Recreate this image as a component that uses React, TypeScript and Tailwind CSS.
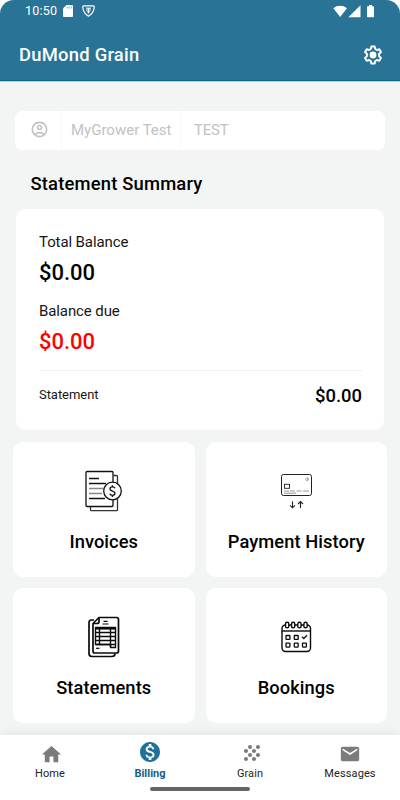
import type { ReactNode } from "react";
import {
  MdHome,
  MdMonetizationOn,
  MdGrain,
  MdEmail,
  MdOutlineAccountCircle,
} from "react-icons/md";

function StatusBar() {
  return (
    <div className="flex h-[22px] items-center pl-[25px] pr-[25px] text-white">
      <span className="w-[33px] whitespace-nowrap text-[12.5px] leading-[22px] tracking-[0.2px]">10:50</span>
      <svg className="ml-[5px] h-[12px] w-[10px]" viewBox="0 0 10 12" fill="none">
        <path d="M3.4 0H9a1 1 0 0 1 1 1v10a1 1 0 0 1-1 1H1a1 1 0 0 1-1-1V3.4z" fill="#fff" />
        <path d="M4.2 1.5v2M6.2 1.5v2M8.2 1.5v2" stroke="#287396" strokeOpacity=".65" strokeWidth=".9" />
      </svg>
      <svg className="ml-[9px] h-[12px] w-[13px]" viewBox="0 0 13 12" fill="none" stroke="#fff">
        <path d="M1.500 .8h10q.8 0 .7 1.400C12 5.500 9.500 9.300 6.500 11.200 3.500 9.300 1 5.500.8 2.200Q.7.8 1.500.8z" strokeWidth="1.2" strokeLinejoin="round" />
        <path d="M4 3.200h5M4 5h4.800M5 6.800h3M6.500 3v5.500" strokeWidth="1" />
      </svg>
      <svg className="ml-auto h-[13px] w-[42px]" viewBox="0 0 42 13" fill="#fff">
        <path d="M.3 3.200C4-.1 10.300-.1 14 3.200L7.200 12z" />
        <path d="M27.500 .3V12.300H15.300z" />
        <path d="M36 0h3v1.200h1.200a.8.8 0 0 1 .8.8v9.500a.8.8 0 0 1-.8.8h-5.400a.8.8 0 0 1-.8-.8V2a.8.8 0 0 1 .8-.8H36z" />
      </svg>
    </div>
  );
}

function GearIcon() {
  return (
    <svg className="size-[22px]" viewBox="0 0 22 22" fill="none" stroke="#fff">
      <path
        d="M9.300 2.500h3.400l.5 2.500 1.700 1 2.400-.8 1.700 2.900-1.900 1.700v2.400l1.900 1.700-1.700 2.900-2.400-.8-1.700 1-.5 2.500H9.300L8.800 17l-1.700-1-2.400.8L3 13.900l1.900-1.700V9.800L3 8.100l1.700-2.900 2.400.8 1.700-1z"
        strokeWidth="1.900"
        strokeLinejoin="round"
      />
      <circle cx="11" cy="11" r="3.400" fill="#fff" stroke="none" />
    </svg>
  );
}

function InvoiceIcon() {
  return (
    <svg className="h-[60px] w-[70px]" viewBox="0 0 70 60" fill="none" stroke="#111" strokeWidth="1.300" strokeLinejoin="round">
      <path d="M20.500 46.500v3.200q0 1 1 1h25q1 0 1-1V16.500q0-1-1-1h-3" stroke="#333" />
      <rect x="16" y="11.500" width="27" height="35" rx="1" fill="#fff" />
      <path d="M19 18.500h10M19 23.500h17M19 38.500h16" />
      <path d="M19 28.500h16M19 33.500h13" stroke="#888" />
      <circle cx="42.500" cy="31" r="8.800" fill="#fff" />
      <path d="M45 28.300c-.5-1-1.400-1.400-2.600-1.400-1.500 0-2.400.8-2.400 2 0 2.800 5 1.500 5 4.300 0 1.300-1 2.100-2.600 2.100-1.200 0-2.200-.5-2.700-1.500M42.400 25.200v1.700M42.400 35.300v1.700" />
    </svg>
  );
}

function CardIcon() {
  return (
    <svg className="h-[60px] w-[70px]" viewBox="0 0 70 60" fill="none" stroke="#222" strokeWidth="1">
      <rect x="16.500" y="14.500" width="30" height="21" rx="2" />
      <rect x="19.500" y="24.300" width="5" height="4" strokeWidth=".9" />
      <path d="m40.500 19.400 1.200-1.500 1.400 1.500-1.400 1.200z" stroke="#777" strokeWidth=".7" />
      <path d="M42.300 17.300c1.300 1.100 1.300 2.500 0 3.600" stroke="#777" strokeWidth=".6" />
      <path d="M19 31h5M25 31h5M31.500 31h5M38 31h6M19 33.200h12" stroke="#8a8a8a" strokeWidth=".9" />
      <path d="M27.500 41.300v6.400M25 45.300l2.500 2.500 2.500-2.500M35.500 48v-6.400M33 44l2.500-2.500L38 44" strokeWidth="1.100" />
    </svg>
  );
}

function StatementIcon() {
  return (
    <svg className="h-[60px] w-[70px]" viewBox="0 1 70 60" fill="none" stroke="#0b0b0b" strokeWidth="1.700" strokeLinejoin="round">
      <path d="M24 15h-2.500Q19 15 19 17.500v31q0 3 3 3h20q3 0 3-3" />
      <path d="M29 12.500h17.500q2 0 2 2V46q0 2-2 2h-22q-1.500 0-1.500-2V18.500z" fill="#fff" />
      <path d="M29 12.500v4q0 2-2 2h-4" />
      <path d="M33.500 16.300h4M32.500 19h6" strokeWidth="1.200" />
      <path d="M25.500 22.500h20v20h-5v-3h-15z" strokeWidth="1.400" />
      <path d="M25.500 23.500h20" strokeWidth="2.200" />
      <path d="M25.500 27.500h20M25.500 31.500h20M25.500 35.500h20M25.500 39.500h20M29.500 24v15.500M40.500 24v18" strokeWidth="1.400" />
      <path d="M26 43.300h3.500" strokeWidth="1.200" />
    </svg>
  );
}

function CalendarIcon() {
  return (
    <svg className="h-[60px] w-[70px]" viewBox="0 1.500 70 60" fill="none" stroke="#0b0b0b" strokeWidth="1.400" strokeLinejoin="round">
      <rect x="17" y="20.500" width="28.500" height="26.500" rx="3.500" />
      <path d="M17 26.500h28.500" />
      <rect x="20.500" y="17.800" width="3.300" height="5.500" rx="1.600" fill="#fff" />
      <rect x="26.500" y="17.800" width="3.300" height="5.500" rx="1.600" fill="#fff" />
      <rect x="32.800" y="17.800" width="3.300" height="5.500" rx="1.600" fill="#fff" />
      <rect x="38.900" y="17.800" width="3.300" height="5.500" rx="1.600" fill="#fff" />
      <g strokeWidth="1.300">
        <rect x="21" y="31" width="3.900" height="3.900" rx=".5" />
        <rect x="29.300" y="31" width="3.900" height="3.900" rx=".5" />
        <path d="m37 32.300 1.800 1.700 3.200-3.200" />
        <rect x="21" y="38.700" width="3.900" height="3.900" rx=".5" />
        <rect x="29.300" y="38.700" width="3.900" height="3.900" rx=".5" />
        <rect x="37.500" y="38.700" width="3.900" height="3.900" rx=".5" />
      </g>
    </svg>
  );
}

function Tile({ icon, label }: { icon: ReactNode; label: string }) {
  return (
    <button className="flex h-[135px] flex-col items-center rounded-[10px] bg-white pt-[18px]">
      {icon}
      <span className="mt-[10px] whitespace-nowrap text-[18.3px] font-medium leading-6 tracking-[0.08px] text-black">
        {label}
      </span>
    </button>
  );
}

function NavItem({ icon, label, active }: { icon: ReactNode; label: string; active?: boolean }) {
  return (
    <div className="flex w-[100px] flex-col items-center">
      <span className="flex h-[30px] items-end justify-center">{icon}</span>
      <span
        className={
          active
            ? "mt-[2px] text-[11px] font-bold leading-[14px] text-[#185f86]"
            : "mt-[2px] text-[11px] leading-[14px] tracking-[0.1px] text-[#222]"
        }
      >
        {label}
      </span>
    </div>
  );
}

export default function App() {
  return (
    <div className="h-[800px] w-[400px] overflow-hidden bg-white font-['Roboto',sans-serif]">
      <div className="flex h-[735px] flex-col overflow-hidden rounded-t-[14px] bg-[#f3f5f5]">
        <header className="h-[82px] shrink-0 border-b border-[#b5ced9] bg-[#287396]">
          <StatusBar />
          <div className="flex h-[59px] items-center justify-between border-b border-[#086390] pl-[19px] pr-[16px] pt-[7px] text-white">
            <h1 className="text-[18.400px] font-medium leading-6 tracking-[0.25px]">DuMond Grain</h1>
            <GearIcon />
          </div>
        </header>

        <div className="mx-[15px] mt-[29px] flex h-[39px] shrink-0 items-center rounded-[7px] bg-white text-[15px] text-[#c2c2c2]">
          <div className="flex h-full w-[47px] items-center justify-center border-r border-[#f8f8f8] pb-[2px] pl-[2px]">
            <MdOutlineAccountCircle className="size-[19px]" />
          </div>
          <div className="flex h-full w-[119px] items-center whitespace-nowrap border-r border-[#f8f8f8] pl-[9px]">MyGrower Test</div>
          <div className="pl-[13px] tracking-[-0.2px]">TEST</div>
        </div>

        <h2 className="ml-[30.500px] mt-[22px] text-[18.400px] font-medium leading-6 tracking-[0.18px] text-black">Statement Summary</h2>

        <section className="mx-[16px] mt-[13px] flex h-[221px] shrink-0 flex-col rounded-[10px] bg-white px-[23px] pt-[23px] text-black">
          <div className="text-[15px] leading-5 tracking-[-0.1px] text-[#161616]">Total Balance</div>
          <div className="mt-[7px] text-[22px] font-medium leading-7">$0.00</div>
          <div className="mt-[14px] text-[15px] leading-5 tracking-[-0.1px] text-[#161616]">Balance due</div>
          <div className="mt-[7px] text-[22px] font-medium leading-7 text-[#f00]">$0.00</div>
          <div className="-mr-px mt-[14px] flex items-start justify-between border-t border-[#f1f1f1] pt-[13px]">
            <span className="mt-px text-[13px] leading-5 tracking-[-0.05px] text-[#161616]">Statement</span>
            <span className="text-[18.400px] font-medium leading-6">$0.00</span>
          </div>
        </section>

        <div className="ml-[13px] mr-[13px] mt-[12px] grid grid-cols-2 gap-[11px]">
          <Tile icon={<span className="ml-[3px]"><InvoiceIcon /></span>} label="Invoices" />
          <Tile icon={<span className="ml-[7px]"><CardIcon /></span>} label="Payment History" />
          <Tile icon={<span className="ml-[3px]"><StatementIcon /></span>} label="Statements" />
          <Tile icon={<span className="ml-[7px]"><CalendarIcon /></span>} label="Bookings" />
        </div>
      </div>

      <nav className="relative flex h-[65px] flex-col bg-white shadow-[0_-2px_10px_rgba(0,0,0,0.06)]">
        <div className="flex">
          <NavItem icon={<MdHome className="-mb-px ml-[2px] size-[23px] text-[#7b7b7b]" />} label="Home" />
          <NavItem icon={<MdMonetizationOn className="mb-px mr-px size-[24px] text-[#21709a]" />} label="Billing" active />
          <NavItem icon={<MdGrain className="ml-[4px] size-[24px] text-[#7b7b7b]" />} label="Grain" />
          <NavItem icon={<MdEmail className="size-[22px] text-[#7b7b7b]" />} label="Messages" />
        </div>
        <div className="mx-auto mt-[6px] h-[4px] w-[100px] rounded-full bg-[#656565]" />
      </nav>
    </div>
  );
}
